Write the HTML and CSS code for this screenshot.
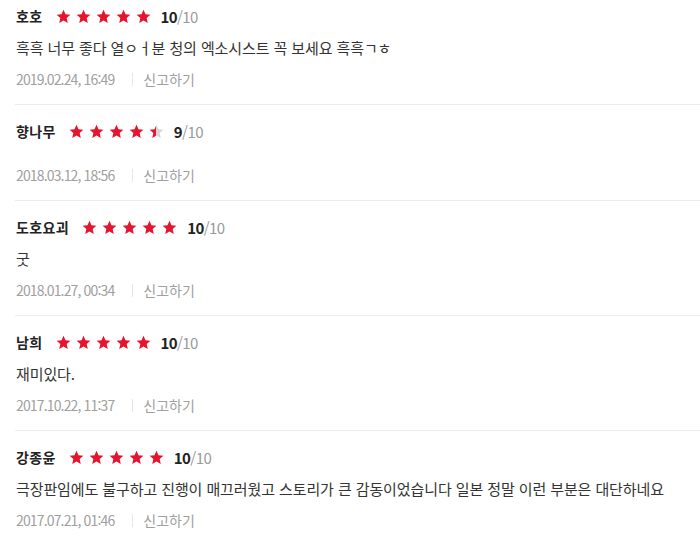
FILE: index.html
```html
<!DOCTYPE html>
<html lang="ko">
<head>
<meta charset="utf-8">
<link rel="stylesheet" href="styles.css">
</head>
<body>
<svg width="0" height="0" class="defs">
  <defs>
    <symbol id="star" viewBox="0 0 24 24">
      <polygon points="12,1.2 15.2,8.5 23,9.2 17.1,14.4 18.8,22.2 12,18.2 5.2,22.2 6.9,14.4 1,9.2 8.8,8.5"/>
    </symbol>
    <linearGradient id="half" x1="0" x2="1" y1="0" y2="0">
      <stop offset="0.5" stop-color="#e5152f"/>
      <stop offset="0.5" stop-color="#d6d6d6"/>
    </linearGradient>
  </defs>
</svg>
<ul class="reviews">
  <li class="review first">
    <div class="head">
      <span class="name">호호</span>
      <span class="stars">
        <svg class="star"><use href="#star"/></svg><svg class="star"><use href="#star"/></svg><svg class="star"><use href="#star"/></svg><svg class="star"><use href="#star"/></svg><svg class="star"><use href="#star"/></svg>
      </span>
      <span class="score"><b>10</b>/10</span>
    </div>
    <p class="text">흑흑 너무 좋다 열ㅇㅓ분 청의 엑소시스트 꼭 보세요 흑흑ㄱㅎ</p>
    <div class="meta"><span class="date">2019.02.24, 16:49</span><span class="report">신고하기</span></div>
  </li>
  <li class="review">
    <div class="head">
      <span class="name">향나무</span>
      <span class="stars">
        <svg class="star"><use href="#star"/></svg><svg class="star"><use href="#star"/></svg><svg class="star"><use href="#star"/></svg><svg class="star"><use href="#star"/></svg><svg class="star half"><use href="#star"/></svg>
      </span>
      <span class="score"><b>9</b>/10</span>
    </div>
    <p class="text"></p>
    <div class="meta"><span class="date">2018.03.12, 18:56</span><span class="report">신고하기</span></div>
  </li>
  <li class="review">
    <div class="head">
      <span class="name">도호요괴</span>
      <span class="stars">
        <svg class="star"><use href="#star"/></svg><svg class="star"><use href="#star"/></svg><svg class="star"><use href="#star"/></svg><svg class="star"><use href="#star"/></svg><svg class="star"><use href="#star"/></svg>
      </span>
      <span class="score"><b>10</b>/10</span>
    </div>
    <p class="text">굿</p>
    <div class="meta"><span class="date">2018.01.27, 00:34</span><span class="report">신고하기</span></div>
  </li>
  <li class="review">
    <div class="head">
      <span class="name">남희</span>
      <span class="stars">
        <svg class="star"><use href="#star"/></svg><svg class="star"><use href="#star"/></svg><svg class="star"><use href="#star"/></svg><svg class="star"><use href="#star"/></svg><svg class="star"><use href="#star"/></svg>
      </span>
      <span class="score"><b>10</b>/10</span>
    </div>
    <p class="text">재미있다.</p>
    <div class="meta"><span class="date">2017.10.22, 11:37</span><span class="report">신고하기</span></div>
  </li>
  <li class="review">
    <div class="head">
      <span class="name">강종윤</span>
      <span class="stars">
        <svg class="star"><use href="#star"/></svg><svg class="star"><use href="#star"/></svg><svg class="star"><use href="#star"/></svg><svg class="star"><use href="#star"/></svg><svg class="star"><use href="#star"/></svg>
      </span>
      <span class="score"><b>10</b>/10</span>
    </div>
    <p class="text">극장판임에도 불구하고 진행이 매끄러웠고 스토리가 큰 감동이었습니다 일본 정말 이런 부분은 대단하네요</p>
    <div class="meta"><span class="date">2017.07.21, 01:46</span><span class="report">신고하기</span></div>
  </li>
</ul>
</body>
</html>
```
FILE: styles.css
```css
html, body {
  margin: 0;
  padding: 0;
  background: #fff;
}
body {
  font-family: "Noto Sans CJK KR", "Noto Sans", sans-serif;
  color: #333;
  overflow: hidden;
}
.defs {
  position: absolute;
  width: 0;
  height: 0;
}
.reviews {
  list-style: none;
  margin: 0 0 0 15px;
  padding: 0;
}
.review {
  padding: 14px 0 15px 1px;
  border-bottom: 1px solid #ececec;
}
.review.first {
  padding-top: 4px;
}
.head {
  display: flex;
  align-items: center;
  height: 24px;
}
.name {
  font-size: 14px;
  font-weight: 700;
  color: #222;
  letter-spacing: 0.4px;
}
.stars {
  display: flex;
  gap: 5px;
  margin-left: 13px;
}
.star {
  width: 15px;
  height: 15px;
  fill: #e5152f;
}
.star.half {
  fill: url(#half);
}
.score {
  margin-left: 10px;
  font-size: 15px;
  color: #9a9a9a;
  letter-spacing: -0.6px;
}
.score b {
  color: #222;
  font-weight: 700;
}
.text {
  margin: 10px 0 0;
  font-size: 15px;
  line-height: 20px;
  color: #333;
  letter-spacing: -0.1px;
}
.text:empty {
  margin-top: 22px;
}
.meta {
  margin-top: 11px;
  display: flex;
  align-items: center;
  height: 20px;
  font-size: 14px;
  color: #a0a0a0;
}
.date {
  letter-spacing: -0.85px;
}
.report {
  margin-left: 18px;
  padding-left: 10px;
  border-left: 1px solid #e6e6e6;
  line-height: 13px;
}
```
